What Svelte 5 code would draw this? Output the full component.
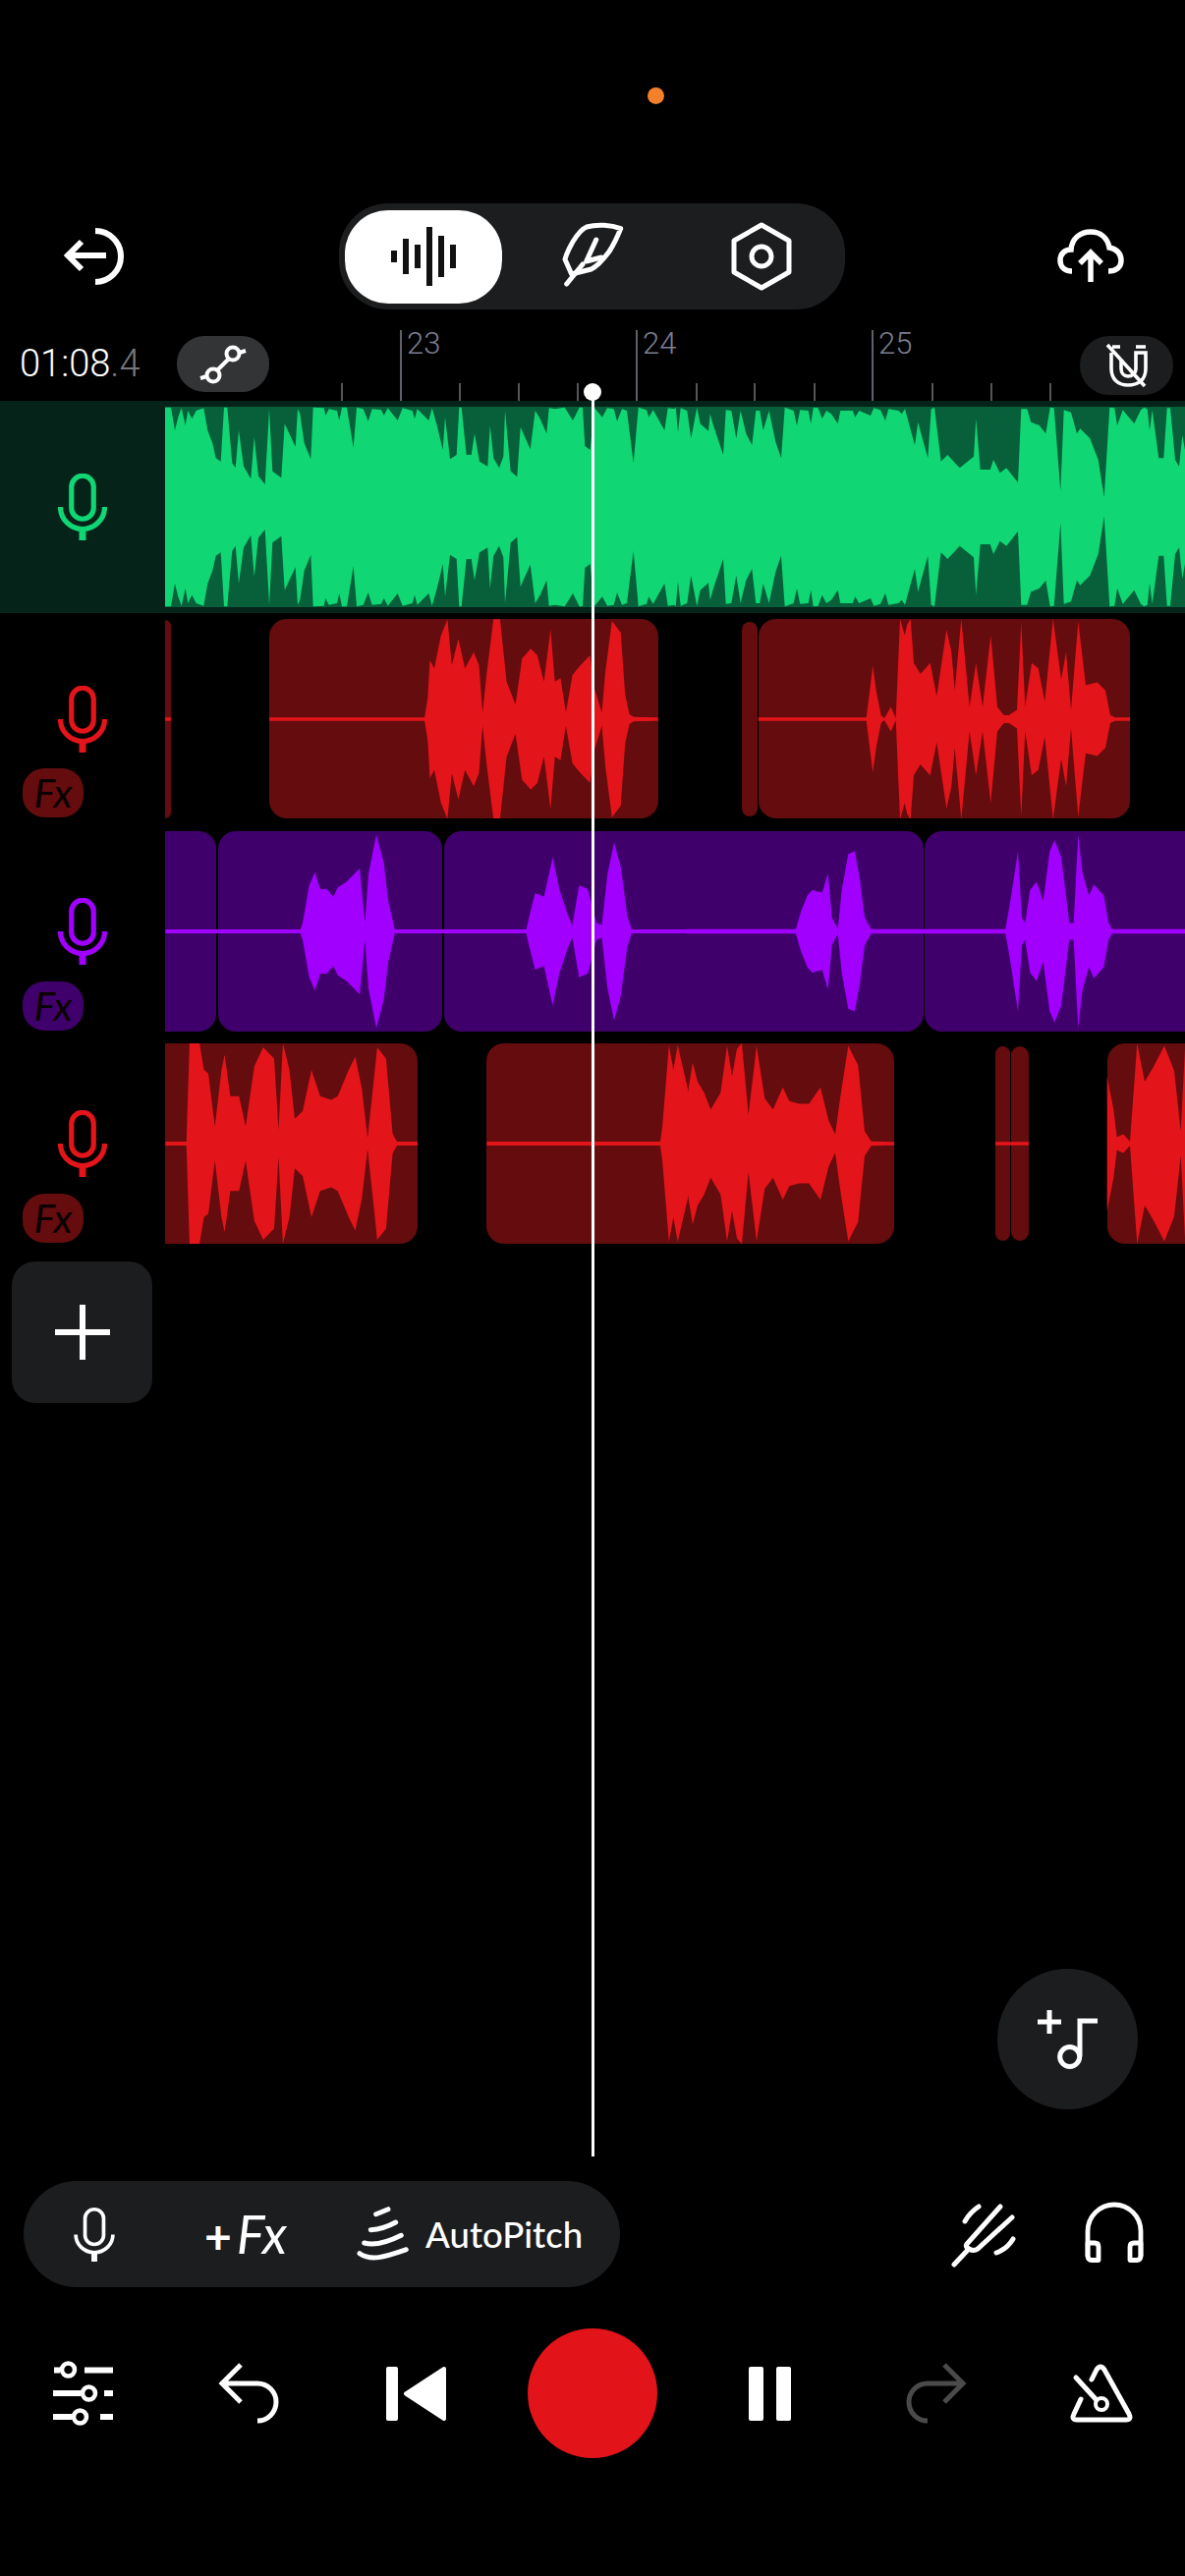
<script>
  // envelope samples: [x, y] traced from the waveforms, mirrored around the centre line
  const LANE_LEFT = 168;

  const greenA = [[0,20],[18,20],[30,90],[40,50],[50,22],[62,75],[70,30],[82,55],[95,30],[118,22],[130,90],[145,130],[155,175],[170,185],[180,20],[190,20],[205,190],[215,205],[225,90],[240,200],[262,238],[272,110],[285,230],[305,255],[318,25],[328,215],[355,235],[365,70],[398,140],[405,25],[412,40],[425,130],[445,178],[452,20],[485,22],[490,45],[500,25],[525,30],[532,60],[540,20],[555,20],[575,143],[585,20],[605,25],[620,62],[632,25],[660,28],[668,45],[680,22],[710,60],[725,22],[755,30],[762,55],[770,25],[805,60],[815,22],[830,75],[848,150],[855,50],[870,178],[890,165],[898,20],[905,20],[920,165],[935,165],[945,100],[960,185],[985,200],[992,75],[1003,175],[1020,205],[1033,170],[1038,30],[1055,215],[1075,232],[1085,80],[1115,148],[1130,30],[1145,55],[1165,100],[1172,22],[1190,25],[1220,20],[1245,60],[1265,20],[1275,20],[1282,138],[1298,150],[1310,20],[1335,50],[1350,22],[1370,25],[1380,62],[1395,25],[1410,30],[1430,190],[1445,20],[1470,28],[1477,50],[1490,28],[1525,90],[1535,22],[1554,25]];
  const greenB = [[5,20],[12,95],[20,22],[40,30],[52,115],[70,20],[80,70],[105,92],[110,40],[120,75],[150,165],[158,28],[175,30],[190,115],[203,30],[220,100],[238,135],[250,30],[262,30],[272,90],[290,30],[310,125],[327,175],[338,20],[365,30],[375,75],[385,28],[410,30],[418,70],[425,20],[440,22],[452,55],[465,30],[480,40],[500,70],[508,30],[545,30],[553,50],[565,30],[600,45],[610,22],[630,28],[645,60],[655,25],[685,30],[695,40],[705,25],[735,135],[745,65],[775,175],[785,25],[795,20],[815,185],[835,165],[872,205],[915,170],[922,55],[935,210],[965,210],[975,180],[995,220],[1015,205],[1050,250],[1060,25],[1078,25],[1090,65],[1115,75],[1135,100],[1148,20],[1160,22],[1180,275],[1190,28],[1212,35],[1230,100],[1240,85],[1270,115],[1295,180],[1313,295],[1330,20],[1345,22],[1353,75],[1370,28],[1405,70],[1425,28],[1435,20],[1445,25],[1452,90],[1460,28],[1480,175],[1495,175],[1505,22],[1515,22],[1530,180],[1542,200],[1552,105],[1560,150]];

  const r1 = [[614,990],[968,990],[975,930],[980,815],[990,840],[1005,740],[1020,690],[1030,830],[1045,750],[1060,840],[1080,790],[1092,830],[1100,975],[1110,850],[1125,690],[1140,690],[1155,880],[1175,950],[1190,810],[1210,780],[1225,800],[1240,880],[1255,720],[1265,880],[1278,870],[1290,975],[1305,860],[1320,835],[1345,800],[1355,900],[1372,975],[1380,850],[1395,695],[1415,730],[1425,920],[1435,980],[1445,988],[1500,990]];
  const r2 = [[215,589],[545,589],[565,495],[575,540],[590,585],[600,590],[620,570],[635,590],[648,410],[662,440],[670,420],[680,410],[690,490],[710,510],[740,490],[760,550],[790,430],[805,470],[815,540],[835,410],[860,570],[880,490],[900,570],[925,440],[945,570],[965,585],[980,585],[1005,575],[1018,415],[1030,570],[1050,490],[1070,500],[1090,560],[1115,410],[1140,520],[1155,470],[1170,575],[1192,415],[1215,530],[1250,525],[1275,540],[1290,585],[1305,589],[1350,589]];
  const p1 = [[377,277],[685,277],[690,260],[705,160],[718,125],[730,170],[745,170],[760,190],[770,165],[790,150],[820,115],[832,260],[840,130],[858,25],[875,100],[885,200],[900,277],[1200,277],[1205,250],[1220,180],[1240,190],[1260,85],[1275,170],[1295,240],[1305,265],[1320,160],[1340,170],[1360,260],[1372,265],[1385,130],[1400,45],[1415,110],[1430,240],[1440,277],[1564,277]];
  const p2 = [[0,971],[330,971],[345,940],[365,910],[380,900],[410,905],[428,870],[440,950],[458,970],[470,900],[490,835],[510,830],[525,880],[540,950],[560,971],[970,971],[985,920],[1008,830],[1020,950],[1030,960],[1045,900],[1065,885],[1085,920],[1105,830],[1120,810],[1140,840],[1165,960],[1178,960],[1192,800],[1205,870],[1225,910],[1240,890],[1270,910],[1285,960],[1295,971],[1518,971]];
  const d1 = [[377,841],[425,841],[432,580],[455,580],[465,650],[475,660],[490,800],[505,650],[512,610],[525,720],[545,720],[560,800],[580,640],[600,590],[625,620],[635,810],[645,580],[660,650],[672,780],[690,760],[710,650],[730,720],[755,730],[770,720],[795,650],[810,615],[825,700],[838,830],[850,700],[860,590],[880,620],[895,820],[905,841],[952,841]];
  const d2 = [[1110,841],[1505,841],[1510,800],[1525,585],[1535,650],[1545,585],[1568,700]];
  const d3 = [[0,1270],[15,1215],[30,1250],[50,1270],[70,1300],[100,1270],[120,1185],[135,1240],[150,1190],[165,1180],[185,1310],[210,1185],[235,1280],[260,1300],[290,1260],[310,1285],[340,1290],[370,1290],[405,1260],[430,1320],[450,1345],[465,1280],[490,1185],[520,1220],[540,1340],[560,1358],[630,1359]];
  const d4 = [[1280,1240],[1300,1300],[1310,1350],[1330,1345],[1350,1358],[1372,1180],[1395,1250],[1420,1225],[1455,1185],[1485,1230],[1505,1340],[1518,1190]];

  // turn samples into lane x / amplitude pairs
  const scale = (pts, x0, sx, mid, sy) => pts.map(([x, y]) => [x0 + x / sx - LANE_LEFT, (mid - y) / sy]);

  function wave(parts, cy) {
    const pts = parts.flat();
    const top = pts.map(([x, a]) => `${x.toFixed(1)} ${(cy - a).toFixed(1)}`);
    const bottom = pts.map(([x, a]) => `${x.toFixed(1)} ${(cy + a).toFixed(1)}`).reverse();
    return `M${top.join("L")}L${bottom.join("L")}Z`;
  }

  const tracks = [
    {
      color: "green", height: 216, fx: false,
      clips: [{ x: 0, w: 1038, y: 6, h: 204, r: 0 }],
      path: wave([scale(greenA, 168, 3, 324, 3), scale(greenB, 686, 3, 324, 3)], 108),
    },
    {
      color: "red", height: 203, fx: true,
      clips: [
        { x: -30, w: 36, y: 1, h: 202, r: 6 },
        { x: 106, w: 396, y: 0, h: 203, r: 18 },
        { x: 587, w: 16, y: 3, h: 198, r: 8 },
        { x: 604, w: 378, y: 0, h: 203, r: 18 },
      ],
      path: wave([[[0, 1.7], [6, 1.7]]], 102) + wave([scale(r1, 0, 2.24, 995, 3)], 102) + wave([scale(r2, 700, 3, 592, 1.78)], 102),
    },
    {
      color: "purple", height: 204, fx: true,
      clips: [
        { x: -30, w: 82, y: 0, h: 204, r: 18 },
        { x: 54, w: 228, y: 0, h: 204, r: 18 },
        { x: 284, w: 488, y: 0, h: 204, r: 18 },
        { x: 773, w: 300, y: 0, h: 204, r: 18 },
      ],
      path: wave([scale(p1, 0, 2.24, 282, 2.61), scale(p2, 700, 3, 975, 1.78)], 102),
    },
    {
      color: "red", height: 204, fx: true,
      clips: [
        { x: -30, w: 287, y: 0, h: 204, r: 18 },
        { x: 327, w: 415, y: 0, h: 204, r: 18 },
        { x: 845, w: 15, y: 3, h: 198, r: 7.5 },
        { x: 861, w: 18, y: 3, h: 198, r: 9 },
        { x: 959, w: 120, y: 0, h: 204, r: 18 },
      ],
      path: wave([scale(d1, 0, 2.24, 846, 2.61)], 102)
        + wave([scale(d2, 0, 2.24, 846, 2.61), scale(d3, 700, 3, 1362, 1.78)], 102)
        + wave([[[845, 1.7], [879, 1.7]]], 102)
        + wave([scale(d4, 700, 3, 1362, 1.78)], 102),
    },
  ];

  const majors = [{ x: 407, label: "23" }, { x: 647, label: "24" }, { x: 887, label: "25" }];
  const minors = [347, 467, 527, 587, 708, 767, 828, 948, 1008, 1068];
</script>

{#snippet mic(w, h, sw)}
  <svg class="mic" width={w} height={h} viewBox="0 0 50 68" preserveAspectRatio="none" fill="none" stroke="currentColor" stroke-width={sw}>
    <rect x="13.75" y="2.25" width="22.5" height="44" rx="11.25" />
    <path d="M2.5 34A22.5 22.5 0 0 0 47.5 34" />
    <path d="M25 56V68" stroke-width="7" />
  </svg>
{/snippet}

<div class="page">
  <div class="status"><span class="dot"></span></div>

  <div class="toolbar">
    <svg class="back" width="62" height="62" viewBox="0 0 62 62" fill="none" stroke="#fff" stroke-width="6">
      <path d="M18 16L4 30L18 44M4 30H43" />
      <path d="M32 5A26 26 0 0 1 32 57" />
    </svg>

    <div class="seg">
      <div class="seg-on">
        <svg width="68" height="62" viewBox="0 0 68 62" fill="#111">
          <rect x="0" y="25" width="6" height="12" />
          <rect x="12" y="13" width="6" height="36" />
          <rect x="24" y="19" width="6" height="24" />
          <rect x="36" y="1" width="6" height="60" />
          <rect x="48" y="10" width="6" height="42" />
          <rect x="60" y="19" width="6" height="24" />
        </svg>
      </div>
      <svg class="feather" width="66" height="70" viewBox="0 0 66 70" fill="none" stroke="#fff" stroke-width="5" stroke-linejoin="round" stroke-linecap="round">
        <path d="M11.7 53L5 38C7 30 11 24 13 20C18 12 22 7 27 5C38 2 52 3 61.7 6.7C58 16 54 24 50 30C44 38 38 45 31.7 48Z" />
        <path d="M36.7 18L26.7 40L42 36M6.7 63L23 43" />
      </svg>
      <svg class="hex" width="62" height="72" viewBox="0 0 62 72" fill="none" stroke="#fff" stroke-width="5" stroke-linejoin="round">
        <path d="M31 4L59 20V52L31 68L3 52V20Z" />
        <circle cx="31" cy="36" r="10" />
      </svg>
    </div>

    <svg class="cloud" width="70" height="58" viewBox="0 0 70 58" fill="none" stroke="#fff" stroke-width="5.5">
      <path d="M16 45C8 45 4 40 4 34C4 27 9 23 15 23C16 11 25 5 35 5C45 5 52 11 54 21C61 22 66 27 66 34C66 41 61 45 53 45" />
      <path d="M35 56V26M24 37L35 26L46 37" />
    </svg>
  </div>

  <div class="ruler">
    {#each minors as x}
      <span class="tick" style="left: {x}px"></span>
    {/each}
    {#each majors as m}
      <span class="tick major" style="left: {m.x}px"><span class="num">{m.label}</span></span>
    {/each}

    <div class="time">01:08<span class="tenths">.4</span></div>
    <div class="chip">
      <svg width="50" height="44" viewBox="0 0 50 44" fill="none" stroke="#fff" stroke-width="4">
        <circle cx="35" cy="11" r="6.5" />
        <circle cx="15" cy="33" r="6.5" />
        <path d="M19 28L31 16M41.5 10L48 8M8.5 34L2 36" />
      </svg>
    </div>
    <div class="chip magnet">
      <svg width="44" height="46" viewBox="0 0 44 46" fill="none" stroke="#fff" stroke-width="3.6">
        <path d="M6 10V26C6 38 14 43 23 43C33 43 41 38 41 26V10H31V26C31 31 27 34 23 34C19 34 16 31 16 26V18" />
        <path d="M7 4H15M31 4H41M2 2L40 44" />
      </svg>
    </div>
  </div>

  <div class="tracks">
    {#each tracks as t}
      <div class="track {t.color}" style="height: {t.height}px">
        <div class="head">
          {@render mic(50, 68, 5.2)}
          {#if t.fx}<span class="fx">Fx</span>{/if}
        </div>
        <svg class="lane" width="1038" height={t.height}>
          {#each t.clips as c}
            <rect class="clip" x={c.x} y={c.y} width={c.w} height={c.h} rx={c.r} />
          {/each}
          <path class="wave" d={t.path} />
        </svg>
      </div>
    {/each}
  </div>

  <div class="add">
    <svg width="56" height="56" viewBox="0 0 56 56" fill="#fff">
      <rect x="25" y="0" width="6" height="56" />
      <rect x="0" y="25" width="56" height="6" />
    </svg>
  </div>

  <div class="mix">
    <div class="tools">
      <span class="pill-mic">{@render mic(42, 55, 4.4)}</span>
      <span class="addfx"><span class="plus">+</span><span class="fxlabel">Fx</span></span>
      <svg class="pitch" width="54" height="58" viewBox="12 8 54 58" fill="none" stroke="#fff" stroke-width="5" stroke-linecap="round">
        <path d="M32.7 16.7L45 11.7" />
        <path d="M27.3 32.7Q40 32 52.7 25" />
        <path d="M20.7 46Q35 50 58.3 38.3" />
        <path d="M16 56.7C28 65 42 60 63.3 52.7" />
      </svg>
      <span class="autopitch">AutoPitch</span>
    </div>

    <svg class="fork" width="68" height="68" viewBox="0 0 68 68" fill="none" stroke="#fff" stroke-width="5" stroke-linecap="round">
      <path d="M4 63L19 47" />
      <path d="M51 4L17 42Q15 45 19 47Q24 50 28 47L63 15" />
      <path d="M15 19Q20 10 29 4M47 51Q58 47 64 37" />
    </svg>
    <svg class="phones" width="60" height="62" viewBox="0 0 60 62" fill="none" stroke="#fff" stroke-width="4.8" stroke-linejoin="round">
      <path d="M3 56V30A27 27 0 0 1 57 30V56" />
      <path d="M3 42H10Q14 42 14 46V59.5H7Q3 59.5 3 55Z" />
      <path d="M57 42H50Q46 42 46 46V59.5H53Q57 59.5 57 55Z" />
    </svg>
  </div>

  <div class="transport">
    <svg width="61" height="66" viewBox="0 0 61 66" fill="none" stroke="#fff">
      <path d="M1 9.5H7M32 9.5H61M0 33H28M52 33H61M0 57H19M48 57H61" stroke-width="6" />
      <circle cx="15.5" cy="9" r="6.5" stroke-width="4.5" />
      <circle cx="36.5" cy="33" r="6.5" stroke-width="4.5" />
      <circle cx="27.5" cy="57" r="6.5" stroke-width="4.5" />
    </svg>
    <svg width="64" height="64" viewBox="0 0 64 64" fill="none" stroke="#fff" stroke-width="5">
      <path d="M23 3L4 22L23 41M4 22H40A19 19 0 0 1 40 60" />
    </svg>
    <svg width="61" height="55" viewBox="0 0 61 55" fill="#fff" stroke-linejoin="round">
      <rect x="0" y="0" width="12" height="55" rx="2" />
      <path d="M59 2L20 27.5L59 53Z" stroke="#fff" stroke-width="4" />
    </svg>
    <div class="record"></div>
    <svg width="43" height="55" viewBox="0 0 43 55" fill="#fff">
      <rect x="0" y="0" width="15" height="55" rx="2" />
      <rect x="28" y="0" width="15" height="55" rx="2" />
    </svg>
    <svg width="64" height="64" viewBox="0 0 64 64" fill="none" stroke="#4a4a4a" stroke-width="5">
      <path d="M41 3L60 22L41 41M60 22H24A19 19 0 0 0 24 60" />
    </svg>
    <svg width="66" height="62" viewBox="0 0 66 62" fill="none" stroke="#fff" stroke-width="5" stroke-linecap="round">
      <path d="M23 17L28 7Q32 1 36 7L61 52Q64 58 58 58H8Q2 58 5 52L12 37" />
      <path d="M7 15L28 38" />
      <circle cx="33" cy="42" r="6" stroke-width="4" />
    </svg>
  </div>

  <!-- overlays -->
  <div class="playhead"></div>
  <div class="fab">
    <svg width="61" height="60" viewBox="0 0 61 60" fill="none" stroke="#fff" stroke-width="5">
      <path d="M0 12H24M12 0V24" />
      <path d="M43 11V47M40.5 11H61" />
      <circle cx="32.7" cy="47.5" r="10" />
    </svg>
  </div>
</div>

<style>
  :global(body) {
    margin: 0;
    background: #000;
  }

  .page {
    position: relative;
    display: flex;
    flex-direction: column;
    width: 1206px;
    height: 2622px;
    overflow: hidden;
    background: #000;
    color: #fff;
    font-family: Lato, "Noto Sans", sans-serif;
  }

  .status {
    height: 207px;
    padding: 89px 0 0 659px;
    box-sizing: border-box;
  }

  .dot {
    display: block;
    width: 17px;
    height: 17px;
    border-radius: 50%;
    background: #f4812a;
  }

  .toolbar {
    display: flex;
    align-items: center;
    height: 108px;
    padding: 0 61px 0 65px;
  }

  .seg {
    display: flex;
    align-items: center;
    box-sizing: border-box;
    width: 515px;
    height: 108px;
    margin-left: 218px;
    padding-left: 6px;
    border-radius: 50px;
    background: #1c1d1f;
  }

  .seg-on {
    display: flex;
    align-items: center;
    justify-content: center;
    width: 160px;
    height: 95px;
    padding-left: 2px;
    box-sizing: border-box;
    border-radius: 44px;
    background: #fff;
  }

  .feather {
    margin-left: 59px;
  }

  .hex {
    margin-left: 108px;
  }

  .cloud {
    margin-left: auto;
    margin-top: -2px;
  }

  .ruler {
    position: relative;
    display: flex;
    align-items: flex-start;
    height: 93px;
    padding-top: 27px;
    box-sizing: border-box;
  }

  .tick {
    position: absolute;
    bottom: 0;
    width: 1.5px;
    height: 18px;
    background: #55565c;
  }

  .tick.major {
    height: 72px;
    background: #5f6068;
  }

  .num {
    position: absolute;
    top: 0;
    left: 7px;
    font: 300 31px/28px Roboto, sans-serif;
    color: #7b7e90;
  }

  .time {
    width: 160px;
    margin-left: 20px;
    font: 300 38px/57px Roboto, sans-serif;
    color: #fff;
  }

  .tenths {
    color: #77787e;
  }

  .chip {
    display: flex;
    align-items: center;
    justify-content: center;
    width: 94px;
    height: 57px;
    border-radius: 28px;
    background: #333436;
  }

  .magnet {
    width: 95px;
    height: 60px;
    margin-left: auto;
    margin-right: 12px;
    border-radius: 30px;
    background: #1c1d1f;
  }

  .tracks {
    display: flex;
    flex-direction: column;
  }

  .track {
    display: flex;
  }

  .track:nth-child(2) {
    margin-top: 6px;
  }

  .track:nth-child(3) {
    margin-top: 13px;
  }

  .track:nth-child(4) {
    margin-top: 12px;
  }

  .green {
    --wave: #10d674;
    --clip: #07603a;
    background: #06231a;
  }

  .red {
    --wave: #e3141a;
    --clip: #640c0e;
  }

  .purple {
    --wave: #a100ff;
    --clip: #40006b;
  }

  .head {
    display: grid;
    flex: none;
    width: 168px;
    color: var(--wave);
  }

  .head > * {
    grid-area: 1 / 1;
  }

  .mic {
    display: block;
    place-self: center;
  }

  .fx {
    align-self: end;
    justify-self: start;
    width: 62px;
    height: 50px;
    margin-left: 23px;
    margin-bottom: 1px;
    border-radius: 22px;
    background: var(--clip);
    color: #0a0000;
    font: italic 400 41px/50px Lato, sans-serif;
    text-align: center;
  }

  .lane {
    display: block;
    flex: none;
  }

  .clip {
    fill: var(--clip);
  }

  .wave {
    fill: var(--wave);
  }

  .add {
    display: flex;
    align-items: center;
    justify-content: center;
    width: 143px;
    height: 144px;
    margin: 18px 0 0 12px;
    border-radius: 24px;
    background: #1c1d1f;
  }

  .mix {
    display: flex;
    align-items: center;
    height: 108px;
    margin-top: auto;
    padding-left: 24px;
  }

  .tools {
    display: flex;
    align-items: center;
    box-sizing: border-box;
    width: 607px;
    height: 108px;
    padding-left: 51px;
    border-radius: 54px;
    background: #1c1d1f;
  }

  .pill-mic {
    display: flex;
    color: #fff;
  }

  .addfx {
    display: flex;
    align-items: baseline;
    margin-left: 91px;
    line-height: 1;
  }

  .plus {
    font-size: 48px;
    font-weight: 700;
  }

  .fxlabel {
    margin-left: 5px;
    font-size: 54px;
    font-style: italic;
    font-weight: 400;
  }

  .pitch {
    margin-left: 70px;
  }

  .autopitch {
    margin-left: 17px;
    font-size: 36.5px;
    font-weight: 500;
  }

  .fork {
    margin: 4px 0 0 336px;
  }

  .phones {
    margin: 0 0 4px 69px;
  }

  .transport {
    display: grid;
    grid-template-columns: repeat(3, 169.33px) 191px repeat(3, 169px);
    align-items: center;
    justify-items: center;
    height: 132px;
    margin: 42px 0 120px;
  }

  .record {
    width: 132px;
    height: 132px;
    border-radius: 50%;
    background: #e2141a;
  }

  .playhead {
    position: absolute;
    top: 399px;
    left: 601.5px;
    width: 3px;
    height: 1796px;
    background: #fff;
  }

  .playhead::before {
    content: "";
    position: absolute;
    top: -9px;
    left: -7.5px;
    width: 18px;
    height: 18px;
    border-radius: 50%;
    background: #fff;
  }

  .fab {
    position: absolute;
    top: 2004px;
    left: 1015px;
    display: flex;
    align-items: center;
    justify-content: center;
    width: 143px;
    height: 143px;
    border-radius: 50%;
    background: #1c1d1f;
  }
</style>
